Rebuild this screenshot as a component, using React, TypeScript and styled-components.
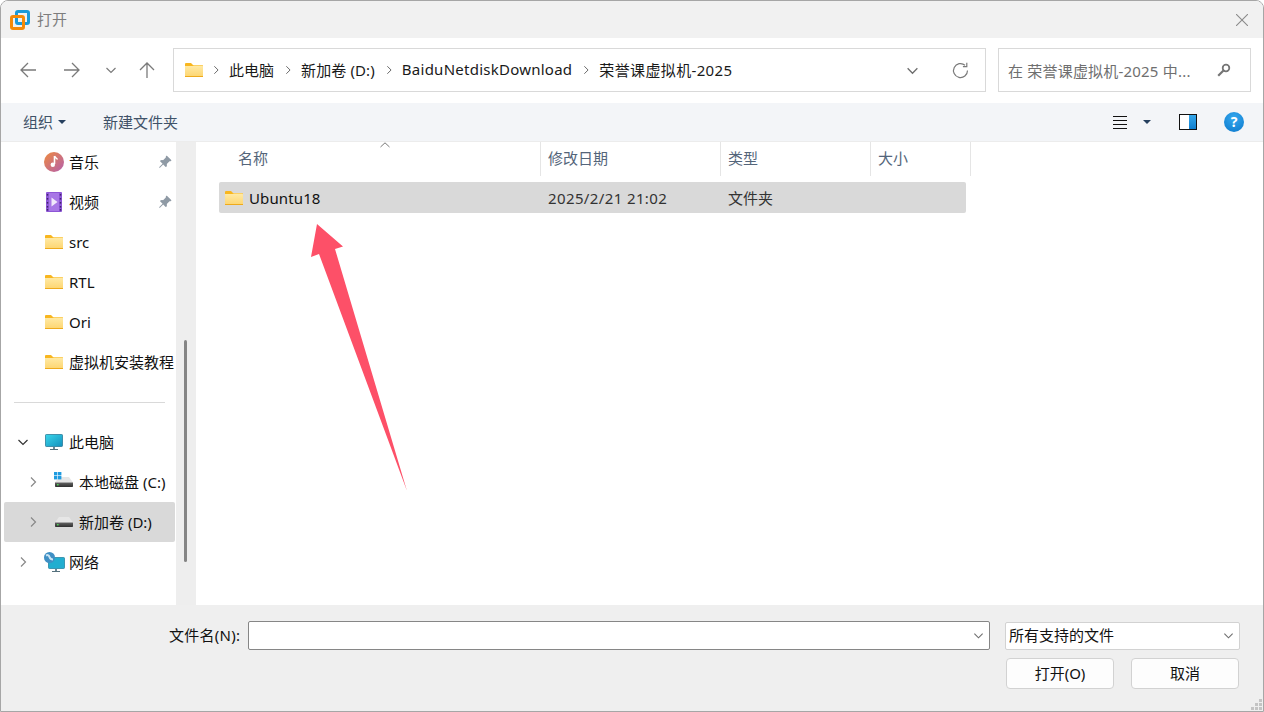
import { FC, ReactElement } from "react";
import styled, { createGlobalStyle } from "styled-components";
import { BsPinAngleFill } from "react-icons/bs";

const GlobalStyle = createGlobalStyle`
  html, body {
    margin: 0;
    padding: 0;
    background: #fff;
    overflow: hidden;
  }
  body {
    font-family: "Noto Sans", "Noto Sans CJK SC", sans-serif;
    font-size: 15px;
  }
`;

const FolderIcon: FC = () => (
  <svg width="18" height="14" viewBox="0 0 18 14">
    <defs>
      <linearGradient id="folderBody" x1="0" y1="0" x2="0" y2="1">
        <stop offset="0" stopColor="#ffeaa6" />
        <stop offset="1" stopColor="#fdd56f" />
      </linearGradient>
    </defs>
    <path d="M0 1a1 1 0 0 1 1-1h5l2 2h9a1 1 0 0 1 1 1v2H0z" fill="#f8b61f" />
    <path d="M0 3h7.500L9 2.500h8a1 1 0 0 1 1 1V13a1 1 0 0 1-1 1H1a1 1 0 0 1-1-1z" fill="url(#folderBody)" />
    <rect x="0" y="13" width="18" height="1" fill="#eeaa1c" />
  </svg>
);

const AppLogo: FC = () => (
  <svg width="20" height="20" viewBox="0 0 20 20">
    <rect x="6.500" y="1.500" width="12" height="12" rx="1.500" fill="none" stroke="#1b9ad8" strokeWidth="3" />
    <rect x="1.500" y="6.500" width="12" height="12" rx="1.500" fill="none" stroke="#f58a07" strokeWidth="3" />
  </svg>
);

const Arrow: FC<{ rotate?: number }> = ({ rotate = 0 }) => (
  <svg width="16" height="16" viewBox="0 0 16 16" style={{ transform: `rotate(${rotate}deg)` }}>
    <path d="M16 8H1M8 1L1 8l7 7" fill="none" stroke="#7a7a7a" strokeWidth="1.300" />
  </svg>
);

const Chevron: FC<{ rotate?: number; color?: string; size?: number }> = ({
  rotate = 0,
  color = "#7b7b7b",
  size = 12,
}) => (
  <svg width={size} height={size} viewBox="0 0 12 12" style={{ transform: `rotate(${rotate}deg)` }}>
    <path d="M1.500 4l4.500 4.500L10.500 4" fill="none" stroke={color} strokeWidth="1.200" />
  </svg>
);

const MusicIcon: FC = () => (
  <svg width="20" height="20" viewBox="0 0 20 20">
    <defs>
      <linearGradient id="musicBg" x1="0" y1="0" x2="1" y2="1">
        <stop offset="0" stopColor="#ee8a3e" />
        <stop offset="1" stopColor="#b45fae" />
      </linearGradient>
    </defs>
    <circle cx="10" cy="10" r="10" fill="url(#musicBg)" />
    <path d="M10.500 4v8" stroke="#fff" strokeWidth="1.600" />
    <path d="M10.500 4c.5 2 2.500 2 3 3.500" fill="none" stroke="#fff" strokeWidth="1.400" />
    <circle cx="8.800" cy="12.800" r="2.200" fill="#fff" />
  </svg>
);

const VideoIcon: FC = () => (
  <svg width="16" height="20" viewBox="0 0 16 20">
    <rect width="16" height="20" rx="1" fill="#8d56d6" />
    <rect x="3" y="1" width="10" height="18" fill="#a877e6" />
    {[2, 6, 10, 14, 17].map((y) => (
      <g key={y}>
        <rect x="0.800" y={y} width="1.400" height="1.600" fill="#40246e" />
        <rect x="13.800" y={y} width="1.400" height="1.600" fill="#40246e" />
      </g>
    ))}
    <path d="M5.500 5.500l6 4.500-6 4.500z" fill="#f1e9fb" />
  </svg>
);

const MonitorIcon: FC = () => (
  <svg width="18" height="16" viewBox="0 0 18 16">
    <defs>
      <linearGradient id="screen" x1="0" y1="0" x2="1" y2="1">
        <stop offset="0" stopColor="#3ad6ea" />
        <stop offset="1" stopColor="#1390bd" />
      </linearGradient>
    </defs>
    <rect x="0.500" y="0.500" width="17" height="12" rx="0.800" fill="url(#screen)" stroke="#1c6f8e" strokeWidth="0.700" />
    <rect x="8" y="13" width="2" height="2" fill="#6b8794" />
    <rect x="5" y="15" width="8" height="1" fill="#55707c" />
  </svg>
);

const DriveIcon: FC<{ windows?: boolean }> = ({ windows }) => (
  <svg width="20" height="20" viewBox="0 0 20 20">
    <defs>
      <linearGradient id="driveFront" x1="0" y1="0" x2="0" y2="1">
        <stop offset="0" stopColor="#6a6a6a" />
        <stop offset="1" stopColor="#2f2f2f" />
      </linearGradient>
    </defs>
    <path d="M1 10.500L5 5h10l4 5.500z" fill="#e6e6e6" />
    <rect x="1" y="10" width="18" height="5" rx="0.800" fill="url(#driveFront)" />
    <rect x="1" y="10" width="18" height="1" fill="#a8a8a8" />
    <rect x="3" y="12" width="1.600" height="1.400" fill="#4fdc58" />
    {windows && (
      <g fill="#1f9be0">
        <rect x="0" y="0" width="3.400" height="3.400" />
        <rect x="4" y="0" width="3.400" height="3.400" />
        <rect x="0" y="4" width="3.400" height="3.400" />
        <rect x="4" y="4" width="3.400" height="3.400" />
      </g>
    )}
  </svg>
);

const NetworkIcon: FC = () => (
  <svg width="21" height="20" viewBox="0 0 21 20">
    <rect x="4.500" y="5.500" width="16" height="11" rx="0.800" fill="#22aed0" stroke="#1b7a99" strokeWidth="0.700" />
    <rect x="11" y="17" width="2" height="2" fill="#6b8794" />
    <rect x="8" y="19" width="8" height="1" fill="#55707c" />
    <circle cx="5.500" cy="5.500" r="5.500" fill="#3f8fc4" />
    <path d="M2 3.500c2-1 3 0 3.500 1.500s2 2.500 3.500 2.500" fill="none" stroke="#c9e4f3" strokeWidth="2" />
  </svg>
);

const PaneIcon: FC = () => (
  <svg width="18" height="16" viewBox="0 0 18 16">
    <defs>
      <linearGradient id="pane" x1="0" y1="0" x2="0" y2="1">
        <stop offset="0" stopColor="#35a7ea" />
        <stop offset="1" stopColor="#0f7fd0" />
      </linearGradient>
    </defs>
    <rect x="0.500" y="0.500" width="17" height="15" fill="#fff" stroke="#111" />
    <rect x="10" y="1" width="7" height="14" fill="url(#pane)" />
  </svg>
);

const ListIcon: FC = () => (
  <svg width="14" height="13" viewBox="0 0 14 13">
    <path d="M0 .5h14M0 4.500h14M0 8.500h14M0 12.500h14" stroke="#111" strokeWidth="1" />
  </svg>
);

const SearchIcon: FC = () => (
  <svg width="14" height="14" viewBox="0 0 14 14">
    <circle cx="9" cy="5" r="3.300" fill="none" stroke="#757575" strokeWidth="1.800" />
    <path d="M6.500 7.500L1.200 12.800" stroke="#757575" strokeWidth="2.200" />
  </svg>
);

const RefreshIcon: FC = () => (
  <svg width="17" height="17" viewBox="0 0 17 17">
    <path d="M15.500 8.500A7 7 0 1 1 13 3.200" fill="none" stroke="#7a7a7a" strokeWidth="1.200" />
    <path d="M14.800 .8v3.900h-3.900" fill="none" stroke="#7a7a7a" strokeWidth="1.200" />
  </svg>
);

const CloseIcon: FC = () => (
  <svg width="12" height="12" viewBox="0 0 12 12">
    <path d="M0 0l12 12M12 0L0 12" stroke="#8a8a8a" strokeWidth="1.100" />
  </svg>
);

type NavItem = {
  label: string;
  icon: ReactElement;
  level?: number;
  chevron?: "open" | "closed";
  pinned?: boolean;
  selected?: boolean;
};

const quickItems: NavItem[] = [
  { label: "音乐", icon: <MusicIcon />, pinned: true },
  { label: "视频", icon: <VideoIcon />, pinned: true },
  { label: "src", icon: <FolderIcon /> },
  { label: "RTL", icon: <FolderIcon /> },
  { label: "Ori", icon: <FolderIcon /> },
  { label: "虚拟机安装教程", icon: <FolderIcon /> },
];

const pcItems: NavItem[] = [
  { label: "此电脑", icon: <MonitorIcon />, chevron: "open" },
  { label: "本地磁盘 (C:)", icon: <DriveIcon windows />, level: 1, chevron: "closed" },
  { label: "新加卷 (D:)", icon: <DriveIcon />, level: 1, chevron: "closed", selected: true },
  { label: "网络", icon: <NetworkIcon />, chevron: "closed" },
];

const crumbs = [
  { text: "此电脑" },
  { text: "新加卷 (D:)", spaced: 0.12 },
  { text: "BaiduNetdiskDownload", spaced: 0.25 },
  { text: "荣誉课虚拟机-2025", spaced: 0.36 },
];

const NavRow: FC<{ item: NavItem }> = ({ item }) => (
  <TreeRow $level={item.level ?? 0} $selected={item.selected}>
    <ChevronSlot>
      {item.chevron === "open" && <Chevron color="#333" />}
      {item.chevron === "closed" && <Chevron rotate={-90} color="#888" />}
    </ChevronSlot>
    <IconSlot>{item.icon}</IconSlot>
    <TreeLabel $raised={!/^[a-zA-Z]+$/.test(item.label)}>{item.label}</TreeLabel>
    {item.pinned && (
      <PinSlot>
        <BsPinAngleFill size={14} />
      </PinSlot>
    )}
  </TreeRow>
);

const App: FC = () => {
  return (
    <Window>
      <GlobalStyle />
      <TitleBar>
        <AppLogo />
        <TitleText>打开</TitleText>
        <CloseButton>
          <CloseIcon />
        </CloseButton>
      </TitleBar>

      <NavBar>
        <NavButtons>
          <NavButton $width={42}>
            <Arrow />
          </NavButton>
          <NavButton $width={46}>
            <Arrow rotate={180} />
          </NavButton>
          <NavButton $width={31}>
            <Chevron />
          </NavButton>
          <NavButton $width={42}>
            <Arrow rotate={90} />
          </NavButton>
        </NavButtons>
        <AddressBox>
          <FolderIcon />
          {crumbs.map((crumb) => (
            <Crumb key={crumb.text}>
              <Chevron rotate={-90} size={10} color="#6a6a6a" />
              <CrumbText $spacing={crumb.spaced ?? 0}>{crumb.text}</CrumbText>
            </Crumb>
          ))}
          <AddressTools>
            <Chevron size={13} color="#6e6e6e" />
            <RefreshIcon />
          </AddressTools>
        </AddressBox>
        <SearchBox>
          <SearchHint>在 荣誉课虚拟机-2025 中...</SearchHint>
          <SearchIcon />
        </SearchBox>
      </NavBar>

      <Toolbar>
        <ToolButton>
          <ToolText>组织</ToolText>
          <Caret />
        </ToolButton>
        <ToolButton>
          <ToolText>新建文件夹</ToolText>
        </ToolButton>
        <ToolRight>
          <ListIcon />
          <ToolCaret />
          <PaneIcon />
          <HelpBadge>?</HelpBadge>
        </ToolRight>
      </Toolbar>

      <Body>
        <Sidebar>
          {quickItems.map((item) => (
            <NavRow key={item.label} item={item} />
          ))}
          <Divider />
          {pcItems.map((item) => (
            <NavRow key={item.label} item={item} />
          ))}
        </Sidebar>
        <ScrollTrack>
          <ScrollThumb />
        </ScrollTrack>
        <Content>
          <HeaderRow>
            <HeaderCell $first>
              名称
              <SortMark>
                <svg width="10" height="6" viewBox="0 0 10 6">
                  <path d="M.5 5L5 .8 9.500 5" fill="none" stroke="#777" strokeWidth="1" />
                </svg>
              </SortMark>
            </HeaderCell>
            <HeaderCell>修改日期</HeaderCell>
            <HeaderCell>类型</HeaderCell>
            <HeaderCell>大小</HeaderCell>
          </HeaderRow>
          <FileRow>
            <NameCell>
              <FolderIcon />
              <span>Ubuntu18</span>
            </NameCell>
            <DetailCell $spacing={0.38}>2025/2/21 21:02</DetailCell>
            <DetailCell>文件夹</DetailCell>
            <DetailCell />
          </FileRow>
        </Content>
        <Annotation width="100" height="270" viewBox="0 0 100 270">
          <path d="M20 4L46 26.500 38 29 110 271 22 34 14 37z" fill="#fd5068" />
        </Annotation>
      </Body>

      <Footer>
        <FooterRow>
          <FieldLabel>文件名(N):</FieldLabel>
          <NameInput>
            <Chevron size={11} color="#6e6e6e" />
          </NameInput>
          <TypeSelect>
            <TypeText>所有支持的文件</TypeText>
            <Chevron size={11} color="#6e6e6e" />
          </TypeSelect>
        </FooterRow>
        <ButtonRow>
          <DialogButton>打开(O)</DialogButton>
          <DialogButton>取消</DialogButton>
        </ButtonRow>
        <Grip width="12" height="12" viewBox="0 0 12 12">
          <path d="M9 0h3v3H9zM5 4h3v3H5zM9 4h3v3H9zM1 8h3v3H1zM5 8h3v3H5zM9 8h3v3H9z" fill="#c4c4c4" />
        </Grip>
      </Footer>
    </Window>
  );
};

export default App;

const Window = styled.div`
  position: relative;
  width: 1264px;
  height: 712px;
  box-sizing: border-box;
  border: 1px solid #a6a6a6;
  border-radius: 8px 8px 0 0;
  display: flex;
  flex-direction: column;
  overflow: hidden;
  background: #fff;
  color: #111;
`;

const TitleBar = styled.div`
  height: 37px;
  flex: none;
  display: flex;
  align-items: center;
  padding: 0 15px 0 9px;
  background: #f1f1f1;
`;

const TitleText = styled.div`
  margin-left: 7px;
  margin-bottom: 2px;
  color: #7d7d7d;
`;

const CloseButton = styled.div`
  margin-left: auto;
  display: flex;
`;

const NavBar = styled.div`
  height: 65px;
  flex: none;
  box-sizing: border-box;
  display: flex;
  align-items: center;
  padding: 0 12px 1px 6px;
  background: #fff;
`;

const NavButtons = styled.div`
  display: flex;
  width: 166px;
  flex: none;
`;

const NavButton = styled.div<{ $width: number }>`
  width: ${(p) => p.$width}px;
  height: 24px;
  display: flex;
  align-items: center;
  justify-content: center;
`;

const AddressBox = styled.div`
  height: 44px;
  width: 813px;
  flex: none;
  box-sizing: border-box;
  border: 1px solid #d9d9d9;
  display: flex;
  align-items: center;
  padding: 0 16px 0 11px;
  color: #1a1a1a;
`;

const Crumb = styled.div`
  display: flex;
  align-items: center;
  gap: 8px;
  margin-left: 8px;
  & + & {
    margin-left: 9px;
  }
`;

const CrumbText = styled.span<{ $spacing: number }>`
  margin-bottom: 2px;
  letter-spacing: ${(p) => p.$spacing}px;
`;

const AddressTools = styled.div`
  margin-left: auto;
  display: flex;
  align-items: center;
  gap: 33px;
`;

const SearchBox = styled.div`
  margin-left: 12px;
  width: 253px;
  height: 44px;
  box-sizing: border-box;
  border: 1px solid #d9d9d9;
  display: flex;
  align-items: center;
  justify-content: space-between;
  padding: 0 19px 0 9px;
`;

const SearchHint = styled.div`
  color: #6f6f6f;
  white-space: nowrap;
  letter-spacing: 0.2px;
`;

const Toolbar = styled.div`
  height: 38px;
  flex: none;
  display: flex;
  align-items: center;
  padding: 0 19px 0 22px;
  gap: 37px;
  background: #f3f5f8;
`;

const ToolButton = styled.div`
  display: flex;
  align-items: center;
  gap: 5px;
  color: #3f5268;
`;

const ToolText = styled.span`
  margin-bottom: 2px;
`;

const Caret = styled.span`
  width: 0;
  height: 0;
  border-left: 4px solid transparent;
  border-right: 4px solid transparent;
  border-top: 4px solid #26405f;
`;

const ToolRight = styled.div`
  margin-left: auto;
  display: flex;
  align-items: center;
`;

const ToolCaret = styled(Caret)`
  margin: 0 28px 0 16px;
`;

const HelpBadge = styled.div`
  margin-left: 27px;
  width: 20px;
  height: 20px;
  border-radius: 50%;
  background: radial-gradient(circle at 50% 30%, #35a8ee, #0b78cc);
  color: #fff;
  font-weight: 700;
  font-size: 14px;
  line-height: 20px;
  text-align: center;
`;

const Body = styled.div`
  position: relative;
  flex: 1;
  min-height: 0;
  display: flex;
  border-top: 1px solid #ececec;
`;

const Sidebar = styled.div`
  width: 175px;
  flex: none;
  box-sizing: border-box;
  padding: 0 1px 0 3px;
  background: #fff;
`;

const TreeRow = styled.div<{ $level: number; $selected?: boolean }>`
  height: 40px;
  box-sizing: border-box;
  display: flex;
  align-items: center;
  padding-left: ${(p) => 11 + p.$level * 10}px;
  border-radius: 2px;
  white-space: nowrap;
  color: #111;
  background: ${(p) => (p.$selected ? "#d9d9d9" : "transparent")};
`;

const ChevronSlot = styled.div`
  width: 16px;
  flex: none;
  display: flex;
  justify-content: center;
`;

const IconSlot = styled.div`
  width: 18px;
  margin-left: 14px;
  margin-right: 6px;
  flex: none;
  display: flex;
  justify-content: center;
  svg {
    flex: none;
  }
`;

const TreeLabel = styled.span<{ $raised: boolean }>`
  margin-bottom: ${(p) => (p.$raised ? 2 : 0)}px;
`;

const PinSlot = styled.div`
  margin-left: auto;
  margin-right: 3px;
  display: flex;
  color: #8f9aa5;
`;

const Divider = styled.div`
  height: 40px;
  margin: 0 10px 0 10px;
  &::after {
    content: "";
    display: block;
    height: 1px;
    background: #d9d9d9;
    transform: translateY(20px);
  }
`;

const ScrollTrack = styled.div`
  width: 20px;
  flex: none;
  box-sizing: border-box;
  padding: 198px 0 0 8px;
  background: #eeeeee;
`;

const ScrollThumb = styled.div`
  width: 3px;
  height: 222px;
  border-radius: 2px;
  background: #858585;
`;

const Content = styled.div`
  flex: 1;
  min-width: 0;
  padding-left: 23px;
`;

const HeaderRow = styled.div`
  display: grid;
  grid-template-columns: 322px 180px 150px 100px;
  height: 34px;
`;

const HeaderCell = styled.div<{ $first?: boolean }>`
  position: relative;
  display: flex;
  align-items: center;
  padding-left: ${(p) => (p.$first ? 19 : 7)}px;
  padding-bottom: 3px;
  border-right: 1px solid #e5e5e5;
  color: #54657a;
  font-size: 15px;
`;

const SortMark = styled.span`
  position: absolute;
  left: 161px;
  top: 0;
  display: flex;
`;

const FileRow = styled.div`
  margin-top: 6px;
  width: 747px;
  height: 31px;
  display: grid;
  grid-template-columns: 322px 180px 150px 95px;
  align-items: center;
  background: #d9d9d9;
  border-radius: 2px;
`;

const NameCell = styled.div`
  display: flex;
  align-items: center;
  gap: 6px;
  padding-left: 6px;
  color: #111;
  letter-spacing: 0.12px;
`;

const DetailCell = styled.div<{ $spacing?: number }>`
  padding-left: 7px;
  color: #333;
  letter-spacing: ${(p) => p.$spacing ?? 0}px;
`;

const Annotation = styled.svg`
  position: absolute;
  left: 296px;
  top: 78px;
  overflow: visible;
`;

const Footer = styled.div`
  position: relative;
  height: 106px;
  flex: none;
  box-sizing: border-box;
  padding: 16px 23px 0 168px;
  background: #efefef;
`;

const FooterRow = styled.div`
  display: flex;
  align-items: center;
  height: 29px;
`;

const FieldLabel = styled.div`
  width: 79px;
  flex: none;
  margin-bottom: 2px;
  color: #111;
  font-size: 15px;
  letter-spacing: 0.25px;
  white-space: nowrap;
`;

const NameInput = styled.div`
  width: 742px;
  height: 29px;
  flex: none;
  box-sizing: border-box;
  border: 1px solid #868686;
  border-radius: 2px;
  background: #fff;
  display: flex;
  align-items: center;
  justify-content: flex-end;
  padding-right: 5px;
`;

const TypeSelect = styled.div`
  margin-left: 15px;
  width: 235px;
  height: 28px;
  flex: none;
  box-sizing: border-box;
  border: 1px solid #d2d2d2;
  border-radius: 2px;
  background: #fff;
  display: flex;
  align-items: center;
  justify-content: space-between;
  padding: 0 5px 0 3px;
  color: #111;
`;

const TypeText = styled.span`
  margin-bottom: 2px;
`;

const ButtonRow = styled.div`
  display: flex;
  justify-content: flex-end;
  gap: 17px;
  margin: 8px 1px 0 0;
`;

const DialogButton = styled.div`
  width: 108px;
  height: 31px;
  box-sizing: border-box;
  padding-bottom: 3px;
  border: 1px solid #d2d2d2;
  border-radius: 4px;
  background: #fdfdfd;
  display: flex;
  align-items: center;
  justify-content: center;
  color: #111;
`;

const Grip = styled.svg`
  position: absolute;
  right: 1px;
  bottom: 0;
`;
